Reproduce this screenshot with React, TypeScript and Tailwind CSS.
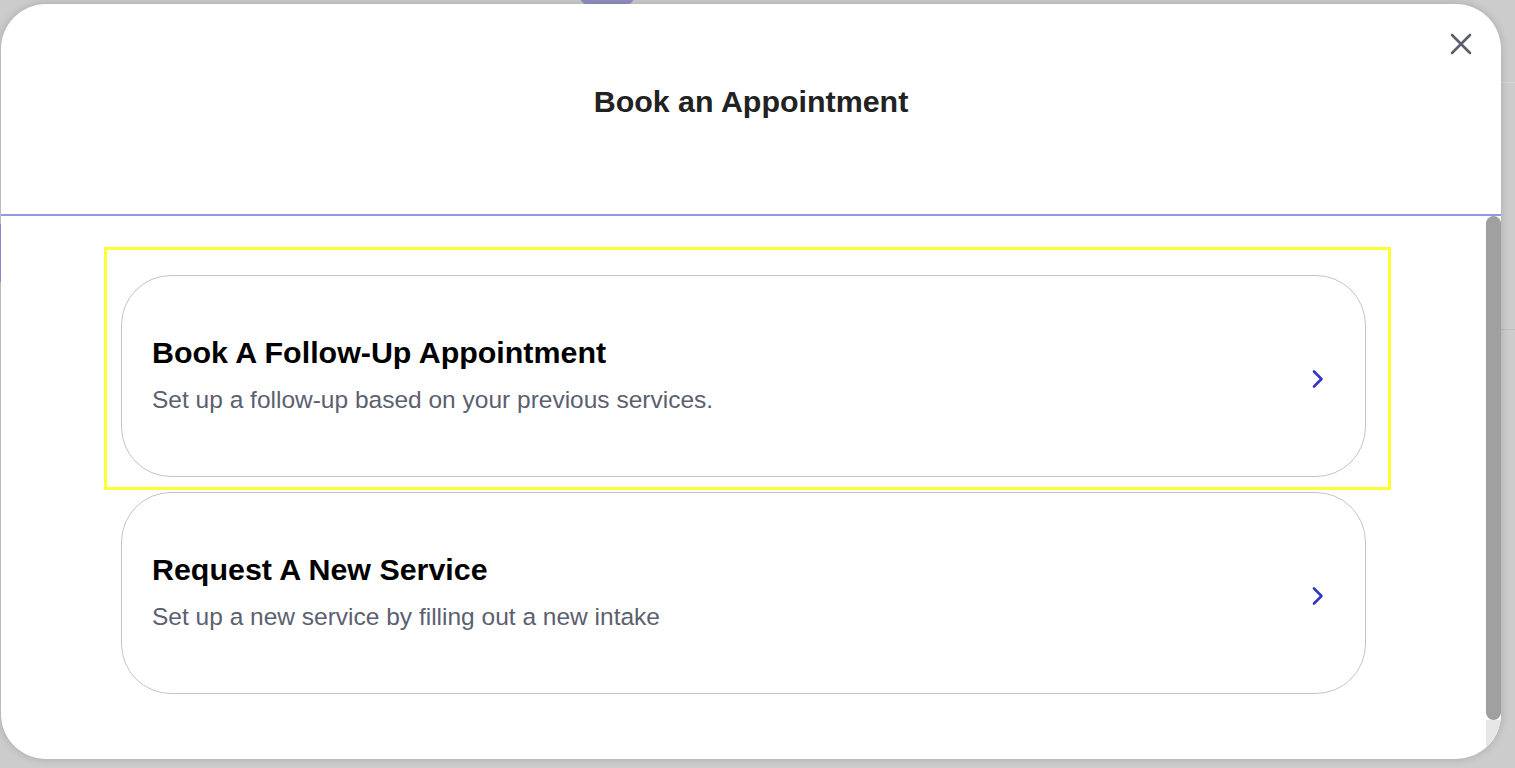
import React from "react";

function Chevron() {
  return (
    <svg width="14" height="20" viewBox="0 0 14 20" fill="none" className="mt-[6px]">
      <path d="M3 2.5 L10.5 10 L3 17.5" stroke="#3535c8" strokeWidth="2.6" strokeLinecap="round" strokeLinejoin="round" />
    </svg>
  );
}

function Card({ title, sub }: { title: string; sub: string }) {
  return (
    <div className="flex h-[202px] w-[1245px] items-center justify-between rounded-[50px] border border-[#c4c4c4] bg-white pl-[30px] pr-[40px]">
      <div className="flex flex-col gap-[16px] pb-[5px]">
        <div className="text-[30.4px] font-bold leading-[36px] text-black">{title}</div>
        <div className="text-[24.5px] leading-[28px] text-[#5b6070]">{sub}</div>
      </div>
      <Chevron />
    </div>
  );
}

export default function App() {
  return (
    <div className="relative h-[768px] w-[1515px] overflow-hidden bg-[#cccccc] font-['Liberation_Sans',Arial,sans-serif]">
      {/* background decorations */}
      <div className="absolute left-[578px] top-[-20px] h-[26px] w-[58px] rounded-b-[14px] bg-[#8f90c0]" />
      <div className="absolute left-0 top-[224px] h-[58px] w-[2px] bg-[#9597d6]" />
      <div className="absolute right-0 top-[82px] h-px w-[14px] bg-[#d6d6d6]" />
      <div className="absolute right-0 top-[329px] h-px w-[14px] bg-[#bdbdbd]" />

      {/* modal */}
      <div className="absolute left-[1px] top-[4px] flex h-[755px] w-[1500px] flex-col overflow-hidden rounded-[45px] bg-white shadow-[0_0_8px_rgba(0,0,0,0.18)]">
        <div className="relative h-[210px] shrink-0 pt-[79px] text-center">
          <div className="text-[30.4px] font-bold leading-[36px] text-[#222222]">Book an Appointment</div>
          <button className="absolute right-[29px] top-[29px] flex h-[22px] w-[22px] items-center justify-center">
            <svg width="22" height="22" viewBox="0 0 22 22" fill="none">
              <path d="M2 2 L20 20 M20 2 L2 20" stroke="#5a5f6b" strokeWidth="2.6" strokeLinecap="round" />
            </svg>
          </button>
        </div>
        <div className="h-[2px] shrink-0 bg-[#9396e0]" />
        <div className="flex min-h-0 flex-1">
          <div className="flex-1 pl-[103px] pt-[31px]">
            <div className="w-[1287px] border-[3px] border-[#ffff33] pb-[10px] pl-[14px] pt-[25px]">
              <Card title="Book A Follow-Up Appointment" sub="Set up a follow-up based on your previous services." />
            </div>
            <div className="pl-[17px] pt-[2px]">
              <Card title="Request A New Service" sub="Set up a new service by filling out a new intake" />
            </div>
          </div>
          <div className="flex w-[15px] flex-col bg-white">
            <div className="h-[504px] w-[15px] rounded-full bg-[#a0a0a0]" />
            <div className="flex-1 bg-[#e6e6e6]" />
          </div>
        </div>
      </div>
    </div>
  );
}
